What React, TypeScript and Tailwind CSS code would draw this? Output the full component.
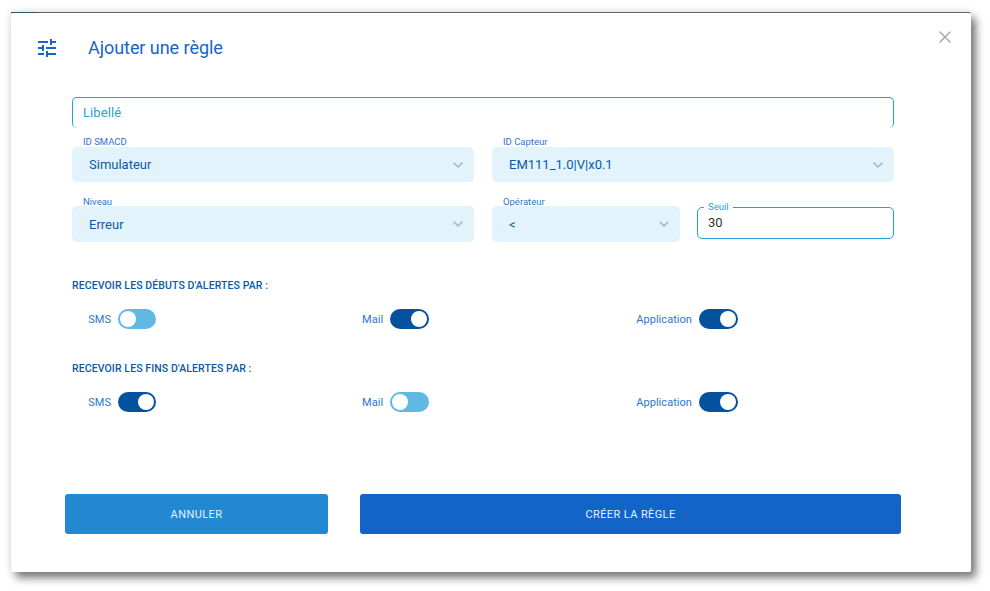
import React from "react";
import { ChevronDown, X } from "lucide-react";

function SelectField({
	label,
	value,
	className,
	labelClass,
	valueClass,
}: {
	label: string;
	value: string;
	className: string;
	labelClass: string;
	valueClass?: string;
}) {
	return (
		<div className={`relative ${className}`}>
			<span className={`absolute left-[11px] text-[9.5px] leading-[11px] text-[#2f74cf] ${labelClass}`}>{label}</span>
			<div className="relative flex h-full items-center justify-between rounded-[5px] bg-[#e3f3fc] pl-[17px] pr-[8px]">
				<span className={`text-[13px] text-[#0a5aa8] ${valueClass ?? ""}`}>{value}</span>
				<ChevronDown size={16} strokeWidth={2} className="text-[#8fb4d8]" />
			</div>
		</div>
	);
}

function Toggle({ label, on, labelWidth, trackWidth }: { label: string; on: boolean; labelWidth: string; trackWidth: string }) {
	return (
		<div className="flex items-center gap-[7px]">
			<span className={`whitespace-nowrap pt-[2px] text-[11px] tracking-[0.05px] text-[#2a76d2] text-right ${labelWidth}`}>{label}</span>
			<div
				className={`flex h-[20px] items-center rounded-full px-[2px] ${trackWidth} ${
					on ? "justify-end bg-[#04529e]" : "justify-start bg-[#5fb9e2]"
				}`}
			>
				<div className="h-[16px] w-[16px] rounded-full bg-white" />
			</div>
		</div>
	);
}

function ToggleRow({ title, sms, mail, app }: { title: string; sms: boolean; mail: boolean; app: boolean }) {
	return (
		<div>
			<p className="text-[10.5px] leading-[12px] font-medium tracking-[0.1px] text-[#0a5aa8]">{title}</p>
			<div className="mt-[17px] flex pl-[16px]">
				<div className="w-[274px]">
					<Toggle label="SMS" on={sms} labelWidth="w-[23px]" trackWidth="w-[38px]" />
				</div>
				<div className="w-[274px]">
					<Toggle label="Mail" on={mail} labelWidth="w-[21px]" trackWidth="w-[39px]" />
				</div>
				<Toggle label="Application" on={app} labelWidth="w-[56px]" trackWidth="w-[39px]" />
			</div>
		</div>
	);
}

export default function App() {
	return (
		<div className="h-[591px] w-[990px] overflow-hidden bg-white pl-[11px] pt-[12px] font-['Roboto',sans-serif]">
			<div className="relative flex h-[560px] w-[960px] flex-col rounded-[2px] border-t border-t-[#666] bg-white pl-[61px] shadow-[5px_6px_8px_rgba(0,0,0,0.5),0_0_10px_rgba(0,0,0,0.12)]">
				<span className="absolute -top-[1px] left-0 h-[1px] w-[26px] bg-[#2a5a6a]" />
				<button className="absolute right-[16px] top-[14px] text-[#a3a3a3]">
					<X size={20} strokeWidth={1.6} />
				</button>

				<div className="-ml-[37px] mt-[23px] flex h-[24px] items-center gap-[29px]">
					<svg width="24" height="24" viewBox="0 0 24 24" fill="#1565c8">
						<path d="M3 17v2h6v-2H3zM3 5v2h10V5H3zm10 16v-2h8v-2h-8v-2h-2v6h2zM7 9v2H3v2h4v2h2V9H7zm14 4v-2H11v2h10zm-6-4h2V7h4V5h-4V3h-2v6z" />
					</svg>
					<h1 className="text-[18px] leading-[24px] tracking-[-0.05px] text-[#1565c8]">Ajouter une règle</h1>
				</div>

				<div className="mt-[37px] flex h-[31px] w-[822px] items-center rounded-[5px] border-x border-t border-[#22a0dc] pl-[10px] text-[13px] tracking-[0.1px] text-[#2a9fd3]">
					Libellé
				</div>

				<div className="mt-[19px] flex w-[822px] gap-[18px]">
					<SelectField label="ID SMACD" value="Simulateur" className="h-[35px] w-[402px]" labelClass="-top-[11px]" />
					<SelectField label="ID Capteur" value="EM111_1.0|V|x0.1" className="h-[35px] w-[402px]" labelClass="-top-[11px]" />
				</div>

				<div className="mt-[24px] flex w-[822px] gap-[18px]">
					<SelectField label="Niveau" value="Erreur" className="h-[36px] w-[402px]" labelClass="-top-[10px]" valueClass="pt-[1px]" />
					<SelectField label="Opérateur" value="<" className="h-[36px] w-[188px]" labelClass="-top-[10px]" valueClass="pt-[1px]" />
					<div className="relative ml-[-1px] mt-[1px] flex h-[32px] w-[197px] items-center rounded-[5px] border border-[#22a0dc] pl-[10px] text-[13px] text-[#333]">
						<span className="absolute -top-[7px] left-[6px] bg-white px-[4px] text-[9.5px] leading-[11px] text-[#2a9fd3]">Seuil</span>
						30
					</div>
				</div>

				<div className="mt-[38px] flex flex-col gap-[34px]">
					<ToggleRow title="RECEVOIR LES DÉBUTS D'ALERTES PAR :" sms={false} mail={true} app={true} />
					<ToggleRow title="RECEVOIR LES FINS D'ALERTES PAR :" sms={true} mail={false} app={true} />
				</div>

				<div className="-ml-[7px] mt-[82px] flex gap-[32px]">
					<button className="h-[40px] w-[263px] rounded-[3px] bg-[#2288d2] pt-[2px] text-[11px] tracking-[0.4px] text-[#e3f3fc]">ANNULER</button>
					<button className="h-[40px] w-[541px] rounded-[3px] bg-[#1264c8] pt-[2px] text-[11px] tracking-[0.4px] text-[#e3f3fc]">CRÉER LA RÈGLE</button>
				</div>
			</div>
		</div>
	);
}
